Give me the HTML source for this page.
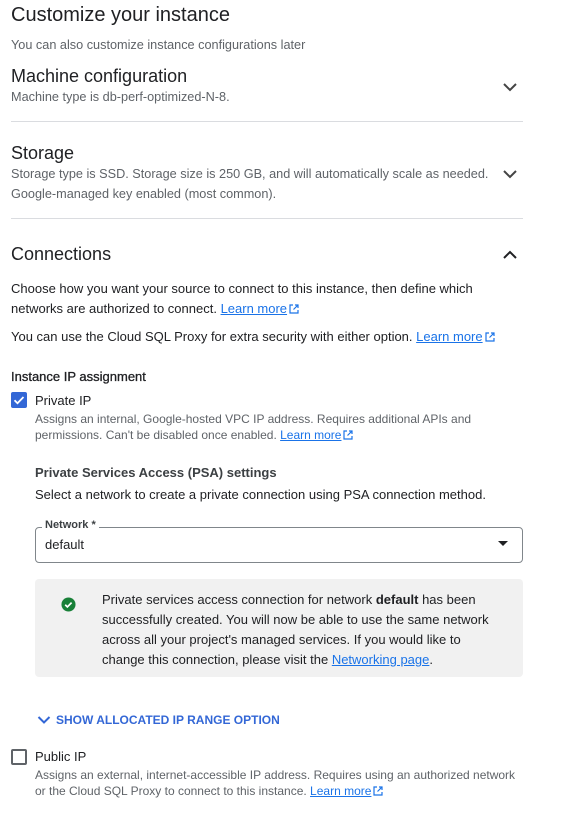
<!DOCTYPE html>
<html><head><meta charset="utf-8"><style>
*{margin:0;padding:0;box-sizing:border-box}
body{width:576px;height:819px;background:#fff;font-family:"Liberation Sans",Roboto,sans-serif;color:#202124;position:relative;overflow:hidden}
.a{position:absolute;white-space:nowrap}
.g{color:#5f6368;font-size:12px}
.g13{color:#5f6368;font-size:12.7px}
.l{color:#1a73e8;text-decoration:underline;text-decoration-color:#1a73e8}
.hr{position:absolute;left:11px;width:512px;height:1px;background:#dadce0}
.ext{display:inline-block;width:10px;height:10px;vertical-align:-1px;margin-left:2px}
</style></head><body>
<div class="a" style="left:11px;top:4px;font-size:20px">Customize your instance</div>
<div class="a g13" style="left:11px;top:38px">You can also customize instance configurations later</div>
<div class="a" style="left:11px;top:66px;font-size:18px">Machine configuration</div>
<div class="a g13" style="left:11px;top:90px">Machine type is db-perf-optimized-N-8.</div>
<svg class="a" style="left:502px;top:81px" width="16" height="12" viewBox="0 0 16 12"><path d="M2 3l6 6 6-6" fill="none" stroke="#444" stroke-width="2"/></svg>
<div class="hr" style="top:121px"></div>
<div class="a" style="left:11px;top:143px;font-size:18px">Storage</div>
<div class="a g13" style="left:11px;top:167px">Storage type is SSD. Storage size is 250 GB, and will automatically scale as needed.</div>
<div class="a g13" style="left:11px;top:187px">Google-managed key enabled (most common).</div>
<svg class="a" style="left:502px;top:168px" width="16" height="12" viewBox="0 0 16 12"><path d="M2 3l6 6 6-6" fill="none" stroke="#444" stroke-width="2"/></svg>
<div class="hr" style="top:218px"></div>
<div class="a" style="left:11px;top:244px;font-size:18px">Connections</div>
<svg class="a" style="left:502px;top:249px" width="16" height="12" viewBox="0 0 16 12"><path d="M2 9l6-6 6 6" fill="none" stroke="#202124" stroke-width="2"/></svg>
<div class="a" style="left:11px;top:281px;font-size:13px">Choose how you want your source to connect to this instance, then define which</div>
<div class="a" style="left:11px;top:301px;font-size:13px">networks are authorized to connect. <span class="l">Learn more</span><svg class="ext" viewBox="0 0 10 10"><path d="M4 1H1v8h8V6M6 1h3v3M9 1L4.5 5.5" fill="none" stroke="#1a73e8" stroke-width="1.2"/></svg></div>
<div class="a" style="left:11px;top:329px;font-size:13px">You can use the Cloud SQL Proxy for extra security with either option. <span class="l">Learn more</span><svg class="ext" viewBox="0 0 10 10"><path d="M4 1H1v8h8V6M6 1h3v3M9 1L4.5 5.5" fill="none" stroke="#1a73e8" stroke-width="1.2"/></svg></div>
<div class="a" style="left:11px;top:369px;font-size:13px;-webkit-text-stroke:0.3px #202124">Instance IP assignment</div>
<svg class="a" style="left:11px;top:392px" width="16" height="16" viewBox="0 0 16 16"><rect width="16" height="16" rx="2" fill="#3367d6"/><path d="M3.5 8.2l3 3 6-6.2" fill="none" stroke="#fff" stroke-width="1.8"/></svg>
<div class="a" style="left:35px;top:393px;font-size:13px">Private IP</div>
<div class="a g" style="left:35px;top:412px">Assigns an internal, Google-hosted VPC IP address. Requires additional APIs and</div>
<div class="a g" style="left:35px;top:428px">permissions. Can't be disabled once enabled. <span class="l">Learn more</span><svg class="ext" viewBox="0 0 10 10"><path d="M4 1H1v8h8V6M6 1h3v3M9 1L4.5 5.5" fill="none" stroke="#1a73e8" stroke-width="1.2"/></svg></div>
<div class="a" style="left:35px;top:465px;font-size:13px;font-weight:bold;color:#3c4043">Private Services Access (PSA) settings</div>
<div class="a" style="left:35px;top:487px;font-size:13px">Select a network to create a private connection using PSA connection method.</div>
<div class="a" style="left:35px;top:527px;width:488px;height:36px;border:1px solid #80868b;border-radius:4px"></div>
<div class="a" style="left:42px;top:519px;padding:0 3px;background:#fff;font-size:11px;font-weight:bold;color:#3c4043">Network *</div>
<div class="a" style="left:45px;top:537px;font-size:13px">default</div>
<svg class="a" style="left:497px;top:540px" width="12" height="8" viewBox="0 0 12 8"><path d="M1 1h10L6 6z" fill="#202124"/></svg>
<div class="a" style="left:35px;top:579px;width:488px;height:98px;background:#f1f1f1;border-radius:4px"></div>
<svg class="a" style="left:61px;top:597px" width="15" height="15" viewBox="0 0 16 16"><circle cx="8" cy="8" r="7.5" fill="#188038"/><path d="M4.5 8.3l2.3 2.3 4.5-4.6" fill="none" stroke="#fff" stroke-width="1.8"/></svg>
<div class="a" style="left:102px;top:590px;font-size:13px;line-height:20px">Private services access connection for network <b>default</b> has been<br>successfully created. You will now be able to use the same network<br>across all your project's managed services. If you would like to<br>change this connection, please visit the <span class="l">Networking page</span>.</div>
<svg class="a" style="left:37px;top:715px" width="14" height="10" viewBox="0 0 14 10"><path d="M1.5 2l5.5 5.5L12.5 2" fill="none" stroke="#3367d6" stroke-width="2"/></svg>
<div class="a" style="left:56px;top:713px;font-size:12px;font-weight:bold;color:#3367d6">SHOW ALLOCATED IP RANGE OPTION</div>
<div class="a" style="left:11px;top:749px;width:16px;height:16px;border:2px solid #5f6368;border-radius:2px"></div>
<div class="a" style="left:35px;top:749px;font-size:13px">Public IP</div>
<div class="a g" style="left:35px;top:768px">Assigns an external, internet-accessible IP address. Requires using an authorized network</div>
<div class="a g" style="left:35px;top:784px">or the Cloud SQL Proxy to connect to this instance. <span class="l">Learn more</span><svg class="ext" viewBox="0 0 10 10"><path d="M4 1H1v8h8V6M6 1h3v3M9 1L4.5 5.5" fill="none" stroke="#1a73e8" stroke-width="1.2"/></svg></div>
</body></html>
